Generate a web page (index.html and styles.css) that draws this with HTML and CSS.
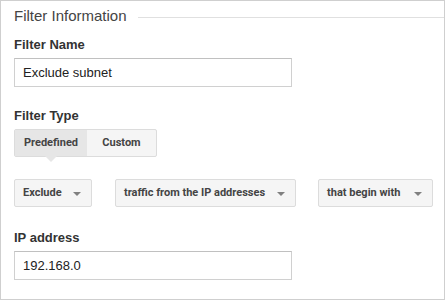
FILE: index.html
```html
<!DOCTYPE html>
<html>
<head>
<meta charset="utf-8">
<link rel="stylesheet" href="styles.css">
</head>
<body>
<div class="panel">
  <div class="legend">
    <span class="legend-text">Filter Information</span>
    <span class="legend-line"></span>
  </div>
  <div class="field field-name">
    <div class="label">Filter Name</div>
    <div class="input">Exclude subnet</div>
  </div>
  <div class="field field-type">
    <div class="label">Filter Type</div>
    <div class="segmented">
      <div class="seg seg-active">Predefined</div>
      <div class="seg">Custom</div>
    </div>
  </div>
  <div class="selects">
    <div class="select sel-1">Exclude <span class="arrow"></span></div>
    <div class="select sel-2">traffic from the IP addresses <span class="arrow"></span></div>
    <div class="select sel-3">that begin with <span class="arrow"></span></div>
  </div>
  <div class="field field-ip">
    <div class="label">IP address</div>
    <div class="input">192.168.0</div>
  </div>
</div>
</body>
</html>
```
FILE: styles.css
```css
html, body {
  margin: 0;
  padding: 0;
  background: #fff;
}
body {
  font-family: "Liberation Sans", Arial, sans-serif;
  width: 445px;
  height: 300px;
}
.panel {
  box-sizing: border-box;
  width: 445px;
  height: 300px;
  border: 1px solid #cfcfcf;
  padding: 0 0 0 13px;
}
.legend {
  display: flex;
  align-items: center;
  height: 18px;
  margin-top: 6px;
}
.legend-text {
  font-size: 15px;
  color: #444;
  line-height: 18px;
}
.legend-line {
  flex: 1;
  border-top: 1px solid #e0e0e0;
  margin-left: 11px;
  margin-top: 2px;
}
.label {
  font-size: 13px;
  font-weight: bold;
  color: #333;
  line-height: 16px;
}
.field-name {
  margin-top: 12px;
}
.field-name .label {
  margin-bottom: 5px;
}
.input {
  box-sizing: border-box;
  width: 278px;
  height: 29px;
  border: 1px solid #d0d0d0;
  border-top-color: #c0c0c0;
  padding-left: 8px;
  font-size: 13px;
  line-height: 27px;
  color: #222;
}
.field-type {
  margin-top: 21px;
}
.field-type .label {
  margin-bottom: 5px;
}
.segmented {
  display: flex;
  width: 143px;
  height: 28px;
  box-sizing: border-box;
  border: 1px solid #dcdcdc;
  border-radius: 2px;
  background: #f5f5f5;
  position: relative;
}
.seg {
  flex: 1;
  font-family: Roboto, "Liberation Sans", sans-serif;
  font-size: 11px;
  font-weight: bold;
  color: #444;
  text-align: center;
  line-height: 26px;
}
.seg-active {
  flex: 0 0 72px;
  background: #e6e6e6;
  position: relative;
}
.seg-active::after {
  content: "";
  position: absolute;
  left: 30px;
  bottom: -6px;
  border-left: 6px solid transparent;
  border-right: 6px solid transparent;
  border-top: 6px solid #e6e6e6;
}
.selects {
  display: flex;
  margin-top: 22px;
}
.select {
  box-sizing: border-box;
  height: 28px;
  border: 1px solid #dcdcdc;
  border-radius: 2px;
  background: #f5f5f5;
  font-family: Roboto, "Liberation Sans", sans-serif;
  font-size: 11px;
  font-weight: bold;
  color: #444;
  line-height: 26px;
  padding-left: 8px;
  display: flex;
  align-items: center;
}
.arrow {
  margin-left: auto;
  margin-right: 10px;
  width: 0;
  height: 0;
  border-left: 4px solid transparent;
  border-right: 4px solid transparent;
  border-top: 4px solid #808080;
  margin-top: 2px;
}
.sel-1 { width: 78px; }
.sel-2 { width: 181px; margin-left: 23px; }
.sel-3 { width: 115px; margin-left: 22px; }
.field-ip {
  margin-top: 23px;
}
.field-ip .label {
  margin-bottom: 5px;
}
.field-ip .input {
  height: 29px;
}
```
